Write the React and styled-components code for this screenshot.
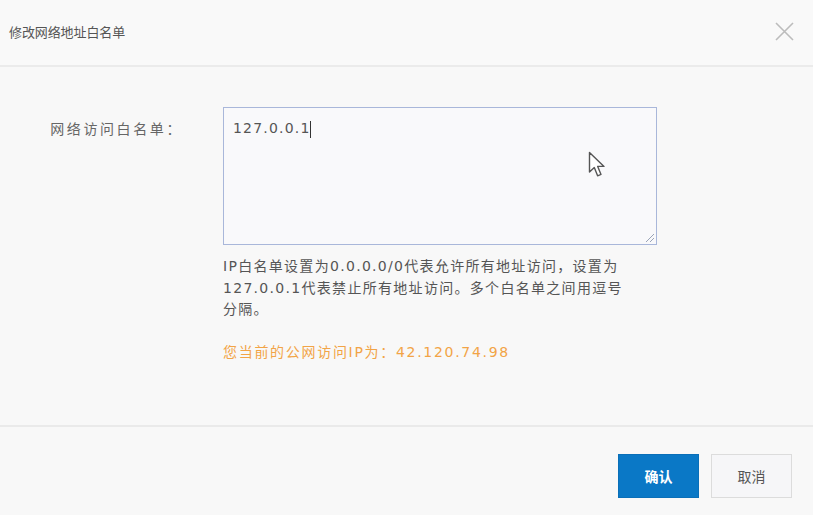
import React from 'react';
import styled, { createGlobalStyle } from 'styled-components';

const GlobalStyle = createGlobalStyle`
  html, body {
    margin: 0;
    padding: 0;
    background: #f8f8f8;
  }
  * {
    box-sizing: border-box;
  }
`;

const FONT = `"DejaVu Sans", "Noto Sans CJK SC", sans-serif`;

const Styles = {
    Dialog: styled.div({
        width: '100%',
        height: '100vh',
        display: 'flex',
        flexDirection: 'column',
        background: '#f8f8f8',
        fontFamily: FONT,
        position: 'relative',
        overflow: 'hidden'
    }),
    Header: styled.div({
        height: '67px',
        display: 'flex',
        alignItems: 'center',
        justifyContent: 'space-between',
        padding: '0 19px 3px 9px',
        borderBottom: '2px solid #ebebeb',
        background: '#f9f9f9'
    }),
    Title: styled.div({
        fontSize: '13px',
        color: '#555',
        letterSpacing: '-0.1px'
    }),
    Close: styled.button({
        width: '20px',
        height: '20px',
        padding: 0,
        border: 0,
        background: 'transparent',
        display: 'flex',
        alignItems: 'center',
        justifyContent: 'center',
        cursor: 'pointer'
    }),
    Body: styled.div({
        flex: 1,
        padding: '40px 0 0 0',
        borderBottom: '2px solid #eaeaea'
    }),
    FormRow: styled.div({
        display: 'grid',
        gridTemplateColumns: '178px 434px',
        columnGap: '45px'
    }),
    Label: styled.div({
        textAlign: 'right',
        fontSize: '14px',
        letterSpacing: '2.6px',
        color: '#666',
        paddingTop: '11px',
        marginRight: '-5px'
    }),
    Field: styled.div({
        display: 'flex',
        flexDirection: 'column'
    }),
    TextBox: styled.div({
        position: 'relative',
        height: '138px',
        border: '1px solid #a9b7da',
        background: '#f9f9fb',
        padding: '10px 9px',
        fontSize: '14px',
        letterSpacing: '1.2px',
        color: '#555',
        lineHeight: '20px'
    }),
    Caret: styled.span({
        display: 'inline-block',
        width: '1px',
        height: '17px',
        background: '#333',
        verticalAlign: 'middle',
        marginLeft: '-1px'
    }),
    Grip: styled.svg({
        position: 'absolute',
        right: '1px',
        bottom: '1px'
    }),
    Help: styled.div({
        marginTop: '11px',
        fontSize: '14px',
        letterSpacing: '1.3px',
        lineHeight: '21.5px',
        color: '#555',
        whiteSpace: 'nowrap'
    }),
    Notice: styled.div({
        marginTop: '20px',
        fontSize: '14px',
        letterSpacing: '1.7px',
        lineHeight: '22px',
        color: '#f2a446'
    }),
    Footer: styled.div({
        height: '88px',
        display: 'flex',
        justifyContent: 'flex-end',
        alignItems: 'flex-start',
        gap: '12px',
        padding: '27px 21px 0 0'
    }),
    Button: styled.button(({ $primary }) => ({
        width: '81px',
        height: '44px',
        fontFamily: FONT,
        fontSize: '14px',
        fontWeight: $primary ? 'bold' : 'normal',
        color: $primary ? '#fff' : '#555',
        background: $primary ? '#0a78c6' : '#f6f6f8',
        border: $primary ? '1px solid #0a6fb8' : '1px solid #dcdcdc',
        cursor: 'pointer'
    })),
    Pointer: styled.svg({
        position: 'absolute',
        left: '588px',
        top: '151px'
    })
};

const CloseIcon = () => (
    <svg width="19" height="19" viewBox="0 0 19 19">
        <path d="M1 1 L18 18 M18 1 L1 18" stroke="#bcbcbc" strokeWidth="1.6" fill="none" />
    </svg>
);

const App = () => {
    const onClose = () => {};
    const onConfirm = () => {};
    const onCancel = () => {};

    return (
        <>
            <GlobalStyle />
            <Styles.Dialog>
                <Styles.Header>
                    <Styles.Title>修改网络地址白名单</Styles.Title>
                    <Styles.Close onClick={onClose} aria-label="关闭">
                        <CloseIcon />
                    </Styles.Close>
                </Styles.Header>
                <Styles.Body>
                    <Styles.FormRow>
                        <Styles.Label>网络访问白名单：</Styles.Label>
                        <Styles.Field>
                            <Styles.TextBox>
                                127.0.0.1<Styles.Caret />
                                <Styles.Grip width="11" height="11" viewBox="0 0 11 11">
                                    <path d="M10 2 L2 10 M10 6 L6 10" stroke="#9aa4b8" strokeWidth="1" />
                                </Styles.Grip>
                            </Styles.TextBox>
                            <Styles.Help>
                                IP白名单设置为0.0.0.0/0代表允许所有地址访问，设置为
                                <br />
                                127.0.0.1代表禁止所有地址访问。多个白名单之间用逗号
                                <br />
                                分隔。
                            </Styles.Help>
                            <Styles.Notice>您当前的公网访问IP为：42.120.74.98</Styles.Notice>
                        </Styles.Field>
                    </Styles.FormRow>
                </Styles.Body>
                <Styles.Footer>
                    <Styles.Button $primary onClick={onConfirm}>确认</Styles.Button>
                    <Styles.Button onClick={onCancel}>取消</Styles.Button>
                </Styles.Footer>
                <Styles.Pointer width="20" height="28" viewBox="0 0 20 28">
                    <path
                        d="M1.5 1.5 L1.5 21 L6.3 16.6 L9.6 24.8 L13 23.4 L9.7 15.4 L16 15.4 Z"
                        fill="#fff"
                        stroke="#555"
                        strokeWidth="1.4"
                        strokeLinejoin="round"
                    />
                </Styles.Pointer>
            </Styles.Dialog>
        </>
    );
};

export default App;
